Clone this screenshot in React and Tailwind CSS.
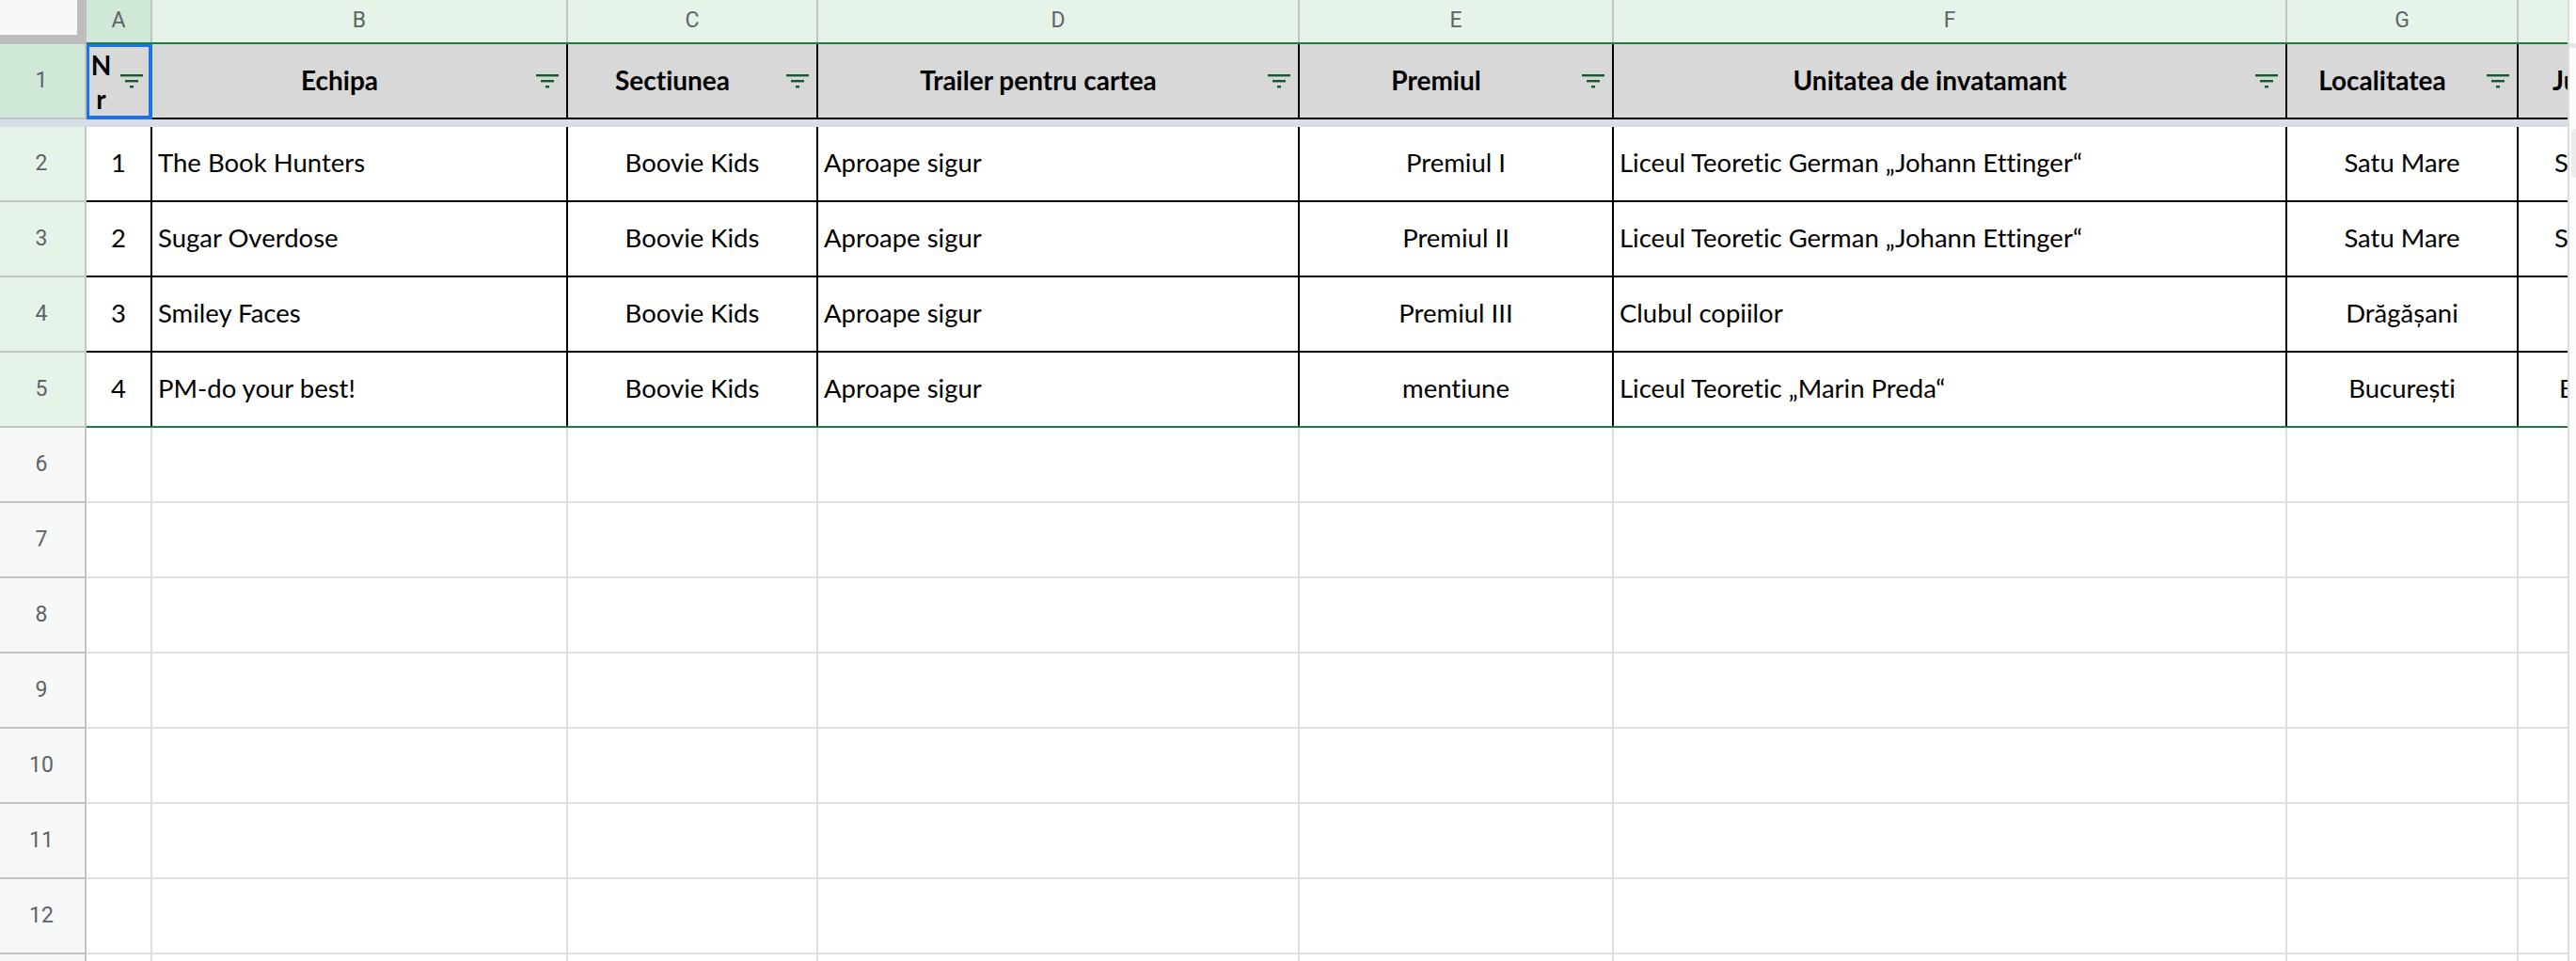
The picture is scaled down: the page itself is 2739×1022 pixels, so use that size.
const COLS = ["w-[70px]", "w-[442px]", "w-[266px]", "w-[512px]", "w-[334px]", "w-[716px]", "w-[246px]", "w-[52px]"];
const LETTERS = ["A", "B", "C", "D", "E", "F", "G", ""];
const HEADERS = ["Echipa", "Sectiunea", "Trailer pentru cartea", "Premiul", "Unitatea de invatamant", "Localitatea"];
const ROWS = [
  ["1", "The Book Hunters", "Boovie Kids", "Aproape sigur", "Premiul I", "Liceul Teoretic German „Johann Ettinger“", "Satu Mare", "Satu Mare", "pl-[38px]"],
  ["2", "Sugar Overdose", "Boovie Kids", "Aproape sigur", "Premiul II", "Liceul Teoretic German „Johann Ettinger“", "Satu Mare", "Satu Mare", "pl-[38px]"],
  ["3", "Smiley Faces", "Boovie Kids", "Aproape sigur", "Premiul III", "Clubul copiilor", "Drăgășani", "", "pl-[38px]"],
  ["4", "PM-do your best!", "Boovie Kids", "Aproape sigur", "mentiune", "Liceul Teoretic „Marin Preda“", "București", "București", "pl-[43px]"],
];
const EMPTY = [6, 7, 8, 9, 10, 11, 12, 13];

function FilterIcon() {
  return (
    <svg width="24" height="15" viewBox="0 0 24 15" className="shrink-0" aria-hidden="true">
      <rect x="0" y="0" width="24" height="2.4" fill="#0f5c2b" />
      <rect x="5" y="6" width="14" height="2.4" fill="#0f5c2b" />
      <rect x="10" y="12" width="4" height="2.4" fill="#0f5c2b" />
    </svg>
  );
}

function RowHeader({ label, selected, active }) {
  const bg = selected ? "bg-[#cfe8d8]" : active ? "bg-[#e6f3e9]" : "bg-[#f7f9f8]";
  return (
    <div className={`${bg} w-[92px] shrink-0 flex items-center justify-center border-r-2 border-b-2 border-[#c2c4c4] text-[23px] text-[#5f6368] font-['Roboto',sans-serif] pr-[2px]`}>
      {label}
    </div>
  );
}

function HeaderCell({ width, label }) {
  return (
    <div className={`${width} shrink-0 flex items-center border-r-2 border-black pr-[8px] bg-[#d8d8d8]`}>
      <div className="flex-1 min-w-0 text-center text-[28px] font-bold whitespace-nowrap pb-[2px]">{label}</div>
      <div className="w-[34px] flex justify-end"><FilterIcon /></div>
    </div>
  );
}

function DataRow({ number, data }) {
  const [n, team, section, film, prize, school, city, county, countyPad] = data;
  const last = number === 5;
  return (
    <div className="flex h-[80px] shrink-0">
      <RowHeader label={number} active />
      <div className={`flex flex-1 min-w-0 border-b-2 pb-[2px] ${last ? "border-[#188038]" : "border-black"}`}>
        <div className={`${COLS[0]} shrink-0 border-r-2 border-black -mb-[2px] pb-[2px] flex items-center justify-center`}>{n}</div>
        <div className={`${COLS[1]} shrink-0 border-r-2 border-black -mb-[2px] pb-[2px] flex items-center pl-[6px] whitespace-nowrap`}>{team}</div>
        <div className={`${COLS[2]} shrink-0 border-r-2 border-black -mb-[2px] pb-[2px] flex items-center justify-center whitespace-nowrap`}>{section}</div>
        <div className={`${COLS[3]} shrink-0 border-r-2 border-black -mb-[2px] pb-[2px] flex items-center pl-[6px] whitespace-nowrap`}>{film}</div>
        <div className={`${COLS[4]} shrink-0 border-r-2 border-black -mb-[2px] pb-[2px] flex items-center justify-center whitespace-nowrap`}>{prize}</div>
        <div className={`${COLS[5]} shrink-0 border-r-2 border-black -mb-[2px] pb-[2px] flex items-center pl-[6px] whitespace-nowrap`}>{school}</div>
        <div className={`${COLS[6]} shrink-0 border-r-2 border-black -mb-[2px] pb-[2px] flex items-center justify-center whitespace-nowrap`}>{city}</div>
        <div className={`${COLS[7]} shrink-0 overflow-hidden -mb-[2px] pb-[2px] flex items-center whitespace-nowrap ${countyPad}`}>{county}</div>
      </div>
    </div>
  );
}

function EmptyRow({ number }) {
  return (
    <div className="flex h-[80px] shrink-0">
      <RowHeader label={number} />
      <div className="flex flex-1 min-w-0 border-b-2 border-[#e0e0e0]">
        {COLS.map((w, i) => (
          <div key={i} className={`${w} shrink-0 ${i < 7 ? "border-r-2 border-[#e0e0e0]" : ""}`} />
        ))}
      </div>
    </div>
  );
}

export default function App() {
  return (
    <div className="flex w-[2739px] h-[1022px] overflow-hidden bg-white text-black text-[27.5px] [font-variant-ligatures:none] font-['Lato',sans-serif]">
      <div className="w-[2730px] shrink-0 flex flex-col overflow-hidden">
        {/* Column letters */}
        <div className="flex h-[47px] shrink-0">
          <div className="w-[92px] shrink-0 bg-[#f7f9f8] border-r-[10px] border-b-[10px] border-[#bdbdbd]" />
          <div className="flex flex-1 min-w-0 border-b-2 border-[#188038] font-['Roboto',sans-serif] text-[23px] text-[#5f6368]">
            {COLS.map((w, i) => (
              <div key={i} className={`${w} shrink-0 flex items-center justify-center ${i === 0 ? "bg-[#cfe8d8]" : "bg-[#e6f3e9]"} ${i < 7 ? "border-r-2 border-[#c2c4c4]" : ""}`}>
                {LETTERS[i]}
              </div>
            ))}
          </div>
        </div>

        {/* Table header row */}
        <div className="flex h-[80px] shrink-0">
          <RowHeader label="1" selected />
          <div className="flex flex-1 min-w-0 border-b-2 border-black bg-[#d8d8d8]">
            <div className={`${COLS[0]} h-[80px] shrink-0 relative z-10 flex items-center border-[3px] border-r-4 border-b-4 border-[#1a73e8] bg-[#d8d8d8] pr-[6px]`}>
              <div className="w-[25px] shrink-0 text-center text-[28px] font-bold break-all leading-[36px]">Nr</div>
              <div className="flex-1 flex justify-end"><FilterIcon /></div>
            </div>
            {HEADERS.map((h, i) => (
              <HeaderCell key={h} width={COLS[i + 1]} label={h} />
            ))}
            <div className={`${COLS[7]} shrink-0 overflow-hidden flex items-center text-[28px] font-bold whitespace-nowrap pl-[36px] pb-[2px]`}>Județul</div>
          </div>
        </div>

        {/* Frozen row separator */}
        <div className="h-[8px] shrink-0 bg-[#d9dde9]" />

        {ROWS.map((r, i) => (
          <DataRow key={i} number={i + 2} data={r} />
        ))}
        {EMPTY.map((n) => (
          <EmptyRow key={n} number={n} />
        ))}
      </div>

      {/* Vertical scrollbar */}
      <div className="flex-1 border-l-2 border-[#dcdcdc] bg-[#fcfcfc] flex flex-col">
        <div className="h-[46px] shrink-0 bg-white" />
        <div className="h-[5px] shrink-0 bg-[#e6e7ec]" />
        <div className="h-[86px] shrink-0" />
        <div className="h-[52px] ml-[2px] shrink-0 rounded-l-[8px] bg-[#ececec]" />
      </div>
    </div>
  );
}
